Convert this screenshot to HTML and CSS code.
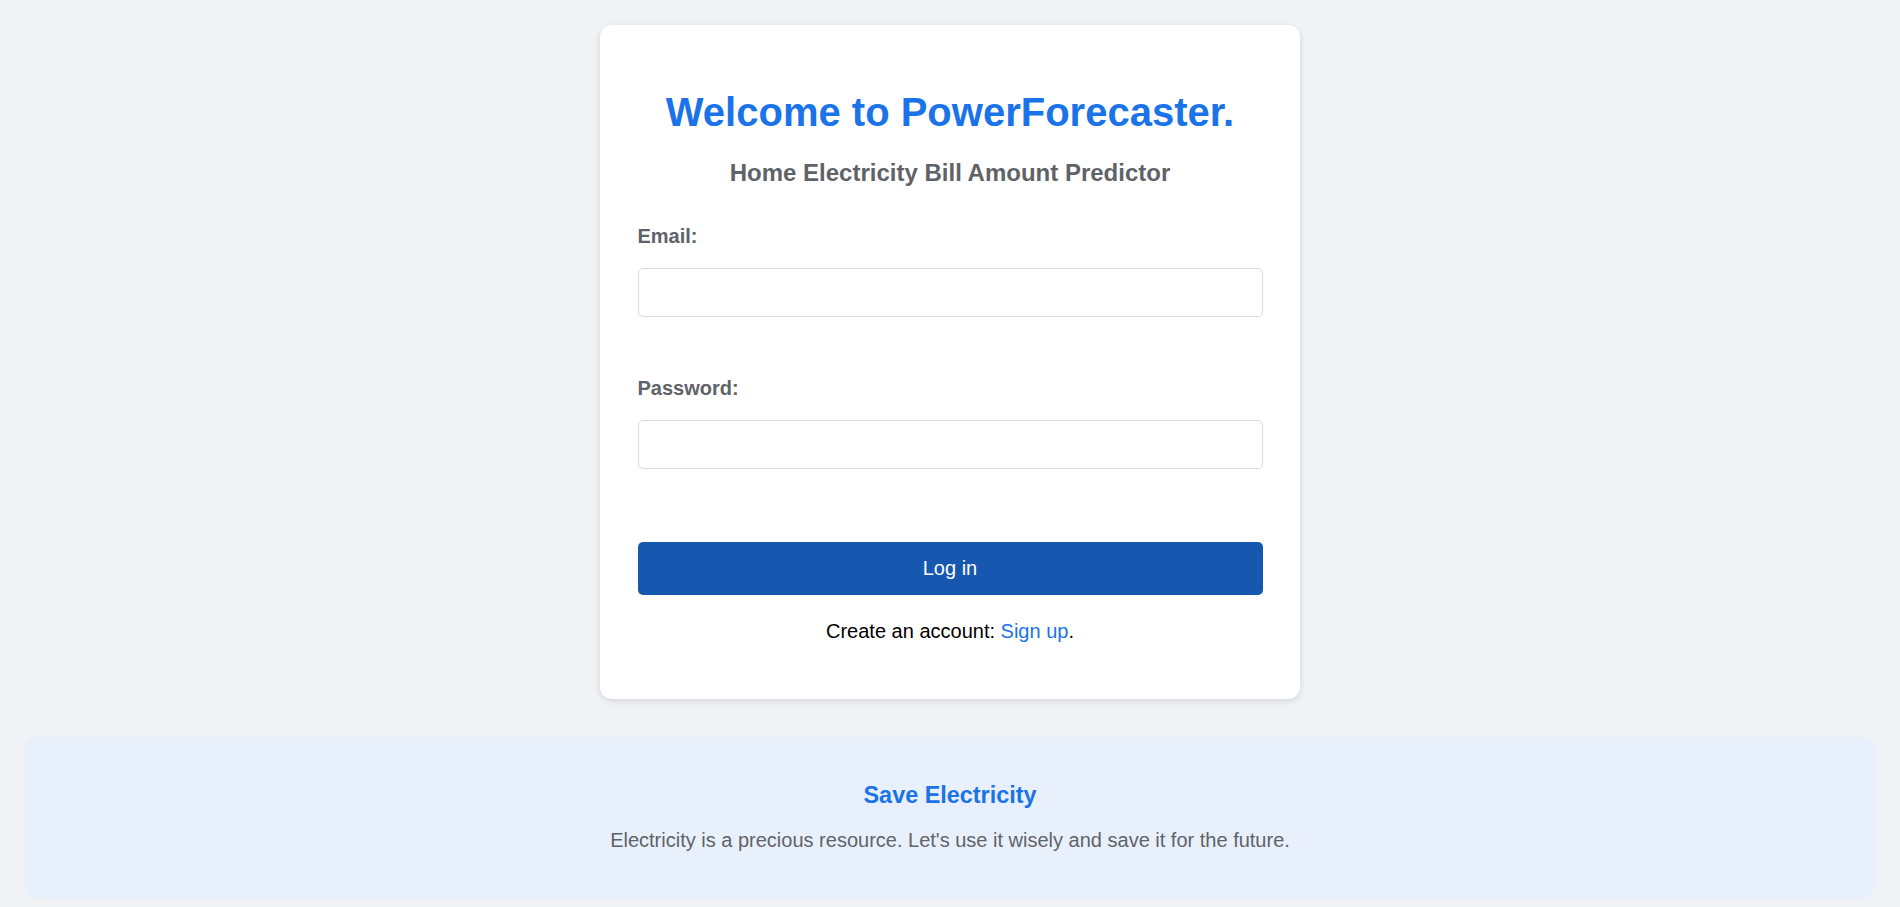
FILE: index.html
```html
<!DOCTYPE html>
<html lang="en">
<head>
<meta charset="utf-8">
<title>PowerForecaster - Log in</title>
<link rel="stylesheet" href="styles.css">
</head>
<body>
  <main class="card">
    <h1 class="title">Welcome to PowerForecaster.</h1>
    <h2 class="subtitle">Home Electricity Bill Amount Predictor</h2>
    <form class="login-form">
      <div class="field field-email">
        <label class="field-label" for="email">Email:</label>
        <input class="field-input" type="email" id="email" name="email">
      </div>
      <div class="field field-password">
        <label class="field-label" for="password">Password:</label>
        <input class="field-input" type="password" id="password" name="password">
      </div>
      <button class="btn-login" type="button">Log in</button>
    </form>
    <p class="signup">Create an account: <a class="signup-link" href="#">Sign up</a>.</p>
  </main>
  <section class="save-panel">
    <h3 class="save-title">Save Electricity</h3>
    <p class="save-text">Electricity is a precious resource. Let's use it wisely and save it for the future.</p>
  </section>
</body>
</html>
```
FILE: styles.css
```css
* {
  box-sizing: border-box;
}

html, body {
  margin: 0;
}

body {
  padding: 25px;
  background: #f0f2f5;
  font-family: "Liberation Sans", Arial, Helvetica, sans-serif;
  color: #000;
}

.card {
  width: 700px;
  margin: 0 auto;
  padding: 37.5px;
  background: #ffffff;
  border-radius: 12px;
  box-shadow: 0 2px 6px rgba(0, 0, 0, 0.12);
}

.title {
  margin: 26px 0 24px;
  font-size: 40px;
  line-height: 46px;
  font-weight: 700;
  text-align: center;
  color: #1a73e8;
}

.subtitle {
  margin: 0 0 38.5px;
  font-size: 24px;
  line-height: 28px;
  font-weight: 700;
  text-align: center;
  color: #5f6368;
}

.login-form {
  display: flex;
  flex-direction: column;
}

.field {
  display: flex;
  flex-direction: column;
}

.field-email {
  margin-bottom: 60.5px;
}

.field-password {
  margin-bottom: 73.5px;
}

.field-label {
  display: block;
  margin-bottom: 19.5px;
  font-size: 20px;
  line-height: 23px;
  font-weight: 700;
  color: #5f6368;
}

.field-input {
  width: 100%;
  height: 49px;
  padding: 0 12px;
  border: 1px solid #dcdcdc;
  border-radius: 5px;
  background: #fff;
  font-family: inherit;
  font-size: 20px;
  outline: none;
}

.btn-login {
  width: 100%;
  height: 52.5px;
  border: none;
  border-radius: 5px;
  background: #1657b0;
  color: #ffffff;
  font-family: inherit;
  font-size: 20px;
  cursor: pointer;
}

.signup {
  margin: 25px 0 19px;
  font-size: 20px;
  line-height: 23px;
  text-align: center;
  color: #000;
}

.signup-link {
  color: #1a73e8;
  text-decoration: none;
}

.save-panel {
  margin-top: 37.5px;
  padding: 45.7px 20px 46px;
  background: #e8f0fc;
  border-radius: 12px;
  text-align: center;
}

.save-title {
  margin: 0 0 20px;
  font-size: 23.4px;
  line-height: 27px;
  font-weight: 700;
  color: #1a73e8;
}

.save-text {
  margin: 0;
  font-size: 20px;
  line-height: 23px;
  color: #5f6368;
}
```
